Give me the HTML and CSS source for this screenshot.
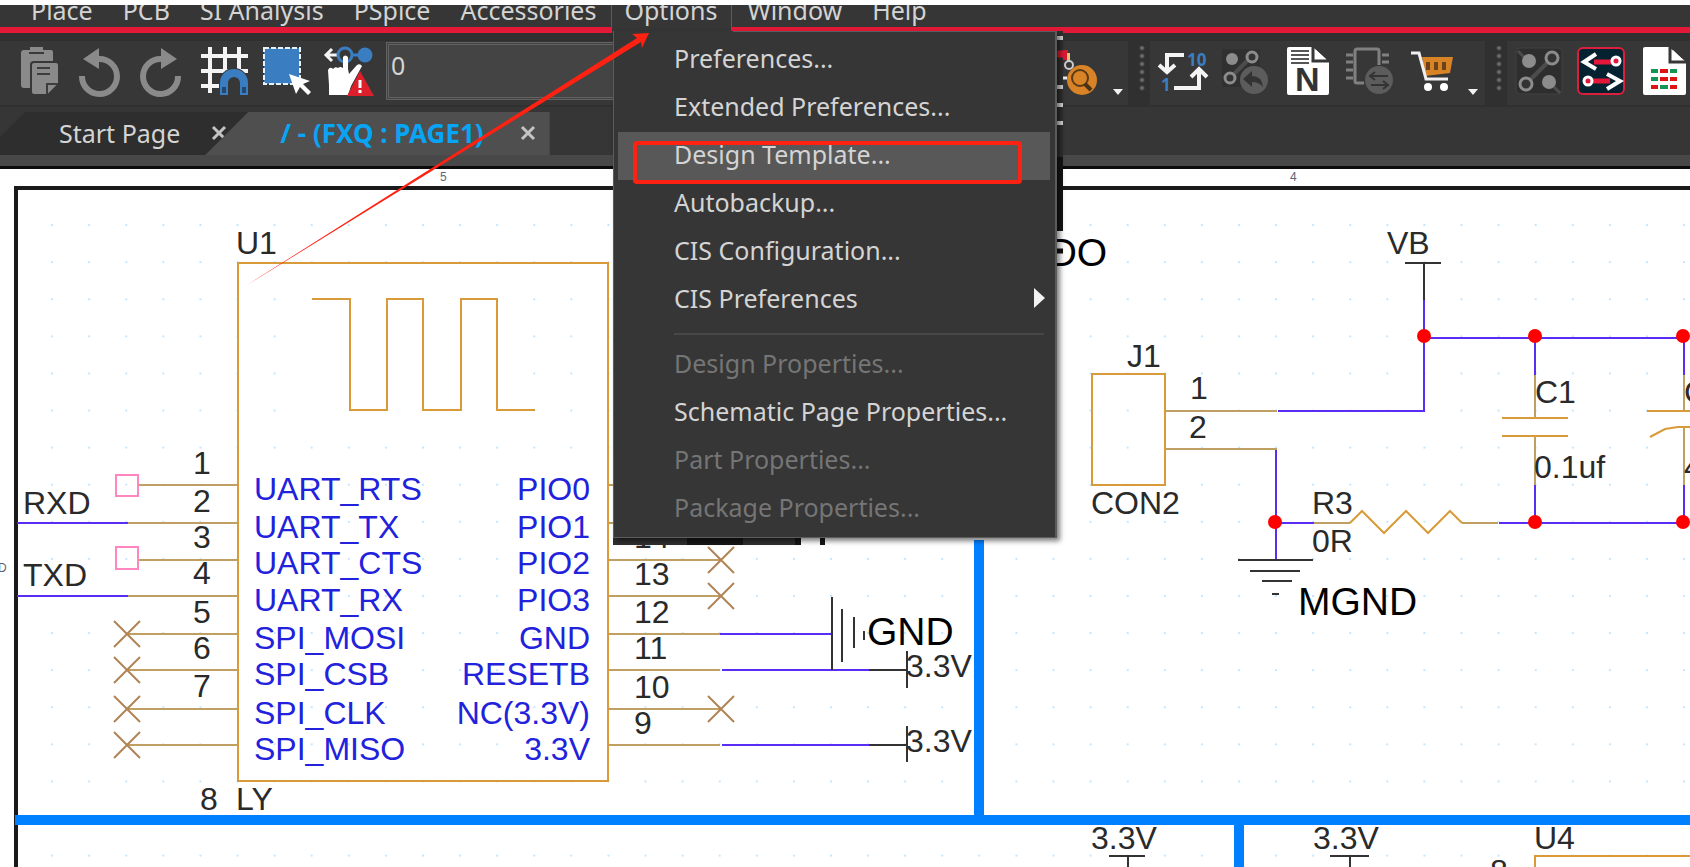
FILE: index.html
```html
<!DOCTYPE html>
<html lang="en">
<head>
<meta charset="utf-8">
<title>Schematic editor</title>
<link rel="stylesheet" href="styles.css">
</head>
<body>
<div class="app">
  <nav class="menubar" aria-label="Main menu">
    <button class="menu-btn">Place</button>
    <button class="menu-btn">PCB</button>
    <button class="menu-btn">SI Analysis</button>
    <button class="menu-btn">PSpice</button>
    <button class="menu-btn">Accessories</button>
    <button class="menu-btn menu-open">Options</button>
    <button class="menu-btn">Window</button>
    <button class="menu-btn">Help</button>
  </nav>

  <div class="toolbar" role="toolbar" aria-label="Tools">
    <div class="group group-first">
      <button class="tool" aria-label="Paste"><svg viewBox="0 0 48 48"><path d="M10 3h6V0h13v3h8q2 0 2 2v36H10q-3 0-3-3V6q0-3 3-3z" fill="#8a8a8a"/><path d="M15 6h15" stroke="#3a3a3a" stroke-width="2"/><path d="M20 15h22q3 0 3 3v19L34 48H20q-3 0-3-3V18q0-3 3-3z" fill="#8a8a8a" stroke="#373737" stroke-width="2"/><path d="M23 21h13M23 27h13M33 47V37h11" stroke="#3d3d3d" stroke-width="2" fill="none"/></svg></button>
      <button class="tool" aria-label="Undo"><svg viewBox="0 0 48 48"><path d="M6 29A17.500 17.500 0 1 0 23 12" fill="none" stroke="#8a8a8a" stroke-width="6"/><path d="M7 12L23 1v21z" fill="#8a8a8a"/></svg></button>
      <button class="tool" aria-label="Redo"><svg viewBox="0 0 48 48"><path d="M40 29A17.500 17.500 0 1 1 23 12" fill="none" stroke="#8a8a8a" stroke-width="6"/><path d="M39 12L23 1v21z" fill="#8a8a8a"/></svg></button>
      <button class="tool" aria-label="Snap to grid"><svg viewBox="0 0 48 48"><path d="M10 0v46M25 0v24M39 0v24M1 9h47M1 24h47M1 39h19" stroke="#f4f4f4" stroke-width="4"/><path d="M19 48V36a15 15 0 0 1 30 0v12z" fill="#373737"/><path d="M24 48V36a10 10 0 0 1 20 0v12" fill="none" stroke="#3a7dc1" stroke-width="8"/><path d="M22 40h4v6h-4zM42 40h4v6h-4z" fill="#24486e"/></svg></button>
      <button class="tool" aria-label="Select area"><svg viewBox="0 0 48 48"><path d="M2 1h36v36H2z" fill="#3a7dc1" stroke="#e8f0f8" stroke-width="2" stroke-dasharray="5 2"/><path d="M27 27l21 7-7 3 8 8-3 3-8-8-4 7z" fill="#fff"/></svg></button>
      <button class="tool" aria-label="Drag connected"><svg viewBox="0 0 48 48"><path d="M2 8h12M8 2L2 8l6 6" fill="none" stroke="#f4f4f4" stroke-width="3"/><circle cx="21" cy="8" r="7" fill="none" stroke="#3a7dc1" stroke-width="3"/><path d="M28 8h6" stroke="#3a7dc1" stroke-width="3"/><circle cx="41" cy="8" r="7.500" fill="#3a7dc1"/><path d="M19 10q2-3 5 0v12l1 5 8-9q3-2 5 1L27 39l-3 9H5V38L4 23q2-4 5-1 2-3 5-1 2-2 5 0z" fill="#fff"/><path d="M36 24l14 25H23z" fill="#dc1f2b"/><path d="M36 33v8M36 43v3" stroke="#fff" stroke-width="3"/></svg></button>
      <input class="find" type="text" value="0" aria-label="Search">
      <button class="tool" aria-label="Find part"><svg viewBox="0 0 48 48"><path d="M12 3h5v10h-5z" fill="#dc1733"/><path d="M16 6h3v8h-3z" fill="#e8c37a"/><circle cx="18" cy="18" r="4" fill="none" stroke="#ccc" stroke-width="2"/><path d="M10 31h6" stroke="#eee" stroke-width="3"/><circle cx="31" cy="33" r="15" fill="#d98327"/><circle cx="29" cy="31" r="8" fill="none" stroke="#5a3a17" stroke-width="2"/><path d="M34 37l6 6" stroke="#4a3218" stroke-width="4"/></svg></button>
      <button class="drop" aria-label="More search options"></button>
    </div>
    <div class="handle"></div>
    <div class="group">
      <button class="tool" aria-label="Renumber"><svg viewBox="0 0 48 48"><path d="M26 8H9v16M1 18l8 7 8-7M16 41h25V24M33 30l8-8 8 8" fill="none" stroke="#f4f4f4" stroke-width="4"/><text class="icon-num" x="29" y="19">10</text><text class="icon-num" x="3" y="44">1</text></svg></button>
      <button class="tool" aria-label="Undo net"><svg viewBox="0 0 48 48"><path d="M2 2h38v38H2z" fill="#303030"/><path d="M12 29L29 12" stroke="#4c4c4c" stroke-width="4"/><circle cx="12" cy="12" r="6" fill="#8c8c8c"/><circle cx="32" cy="10" r="5" fill="#333" stroke="#8c8c8c" stroke-width="3"/><circle cx="10" cy="31" r="5" fill="#333" stroke="#8c8c8c" stroke-width="3"/><circle cx="34" cy="33" r="14" fill="#5c5c5c"/><path d="M23 32l9-8v5q10 0 11 11-4-5-11-5v5z" fill="#333"/></svg></button>
      <button class="tool" aria-label="Netlist"><svg viewBox="0 0 48 48"><path d="M7 0h24l16 15v31q0 2-2 2H7q-2 0-2-2V2q0-2 2-2z" fill="#fff"/><path d="M32 0h15v14z" fill="#373737"/><path d="M31 0v14h16" fill="none" stroke="#373737" stroke-width="3"/><path d="M34 3l10 9H34z" fill="#fff"/><path d="M9 4h18M9 8h18M9 12h18M9 16h18" stroke="#555" stroke-width="2"/><text class="icon-n" x="13" y="44">N</text></svg></button>
      <button class="tool" aria-label="Swap part"><svg viewBox="0 0 48 48"><path d="M20 36H13q-2 0-2-2V4q0-2 2-2h20q2 0 2 2v14" fill="none" stroke="#808080" stroke-width="3"/><path d="M2 8h7M2 15h7M2 23h7M2 31h7M38 8h7M38 15h7" stroke="#808080" stroke-width="3"/><circle cx="35" cy="33" r="14" fill="#5c5c5c"/><path d="M44 29H27M31 25l-5 4 5 4M27 38h17M39 34l5 4-5 4" fill="none" stroke="#333" stroke-width="2"/></svg></button>
      <button class="tool" aria-label="Parts cart"><svg viewBox="0 0 48 48"><path d="M16 10h31l-3 16-25 3z" fill="#d98327"/><path d="M22 15v8M30 15v8M38 15v8" stroke="#6b431b" stroke-width="4"/><path d="M5 6h8l7 26h22" fill="none" stroke="#f0f0f0" stroke-width="3"/><circle cx="22" cy="40" r="4" fill="#fff"/><circle cx="38" cy="40" r="4" fill="#fff"/></svg></button>
      <button class="drop" aria-label="More cart options"></button>
    </div>
    <div class="handle"></div>
    <div class="group group-last">
      <button class="tool" aria-label="Net groups"><svg viewBox="0 0 48 48"><rect x="1" y="1" width="46" height="46" rx="4" fill="#2e2e2e" stroke="#414141"/><path d="M3 4l6 6M39 40l6 6" stroke="#4c4c4c" stroke-width="3"/><path d="M15 33L33 15" stroke="#4c4c4c" stroke-width="4"/><circle cx="14" cy="14" r="7" fill="#8c8c8c"/><circle cx="34" cy="35" r="7" fill="#8c8c8c"/><circle cx="37" cy="11" r="6" fill="#333" stroke="#8c8c8c" stroke-width="3"/><circle cx="11" cy="37" r="6" fill="#333" stroke="#8c8c8c" stroke-width="3"/></svg></button>
      <button class="tool" aria-label="Off-page ports"><svg viewBox="0 0 48 48"><rect x="1" y="1" width="46" height="46" rx="5" fill="#04222f" stroke="#dc1f3c" stroke-width="2"/><path d="M17 15h18M15 34h18" stroke="#e3173a" stroke-width="5"/><path d="M19 7L7 15l12 7M30 27l13 7-13 8" fill="none" stroke="#fff" stroke-width="4"/><circle cx="39" cy="14" r="4" fill="#e3173a" stroke="#fff" stroke-width="3"/><circle cx="11" cy="34" r="4" fill="#e3173a" stroke="#fff" stroke-width="3"/></svg></button>
      <button class="tool" aria-label="Report"><svg viewBox="0 0 48 48"><path d="M6 0h24l17 15v31q0 2-2 2H6q-2 0-2-2V2q0-2 2-2z" fill="#fff"/><path d="M32 0h15v14z" fill="#373737"/><path d="M31 0v15h16" fill="none" stroke="#373737" stroke-width="3"/><path d="M34 3l10 10H34z" fill="#fff"/><path d="M12 24h7M31 24h7M12 32h7M21 40h8" stroke="#149455" stroke-width="4"/><path d="M21 24h8M21 32h8M31 32h7M12 40h7M31 40h7" stroke="#e01313" stroke-width="4"/></svg></button>
    </div>
  </div>

  <div class="tabs">
    <div class="tab"><span>Start Page</span><button class="close" aria-label="Close Start Page"><svg viewBox="0 0 16 16"><path d="M2 2l12 12M14 2L2 14" stroke="#c4c4c4" stroke-width="3"/></svg></button></div>
    <div class="tab tab-active"><span>/ - (FXQ : PAGE1)</span><button class="close" aria-label="Close PAGE1"><svg viewBox="0 0 16 16"><path d="M2 2l12 12M14 2L2 14" stroke="#c4c4c4" stroke-width="3"/></svg></button></div>
  </div>

  <main class="canvas">
    <svg class="sheet" role="img" aria-label="Schematic page">
      <defs>
        <pattern id="grid" x="14" y="187" width="37.090" height="37.090" patternUnits="userSpaceOnUse"><path d="M0 0h2v2H0z" fill="#c4e6ff"/></pattern>
        <g id="nc"><path d="M-13-13L13 13M13-13L-13 13" stroke="#b08455" stroke-width="2"/></g>
      </defs>
      <g transform="translate(0 -169)">
        <rect x="40" y="200" width="3000" height="2000" fill="url(#grid)"/>
        <path d="M290 290h230v130H290z" fill="#fff"/>
        <g class="frame"><path d="M3000 188H16V2000"/></g>
        <text class="ruler" x="440" y="181">5</text>
        <text class="ruler" x="1290" y="181">4</text>
        <text class="ruler" x="-2" y="572">D</text>

        <g class="pin"><path d="M138 485h100M128 523h110M138 560h100M128 596h110M127 634h111M127 670h111M127 709h111M127 745h111M608 485h112M608 523h112M608 560h112M608 596h112M608 634h112M608 670h112M608 709h112M608 745h112"/></g>
        <g class="part"><path d="M238 263H608V781H238zM312 299H350V410H387V299H423V410H461V299H497V410H535"/></g>
        <g class="port"><path d="M116 475h22v21h-22zM116 547h22v22h-22z"/></g>
        <g class="wire"><path d="M17 523H128M17 596H128M720 634H831M722 670H869M722 745H869"/></g>
        <use href="#nc" x="127" y="634"/><use href="#nc" x="127" y="670"/><use href="#nc" x="127" y="709"/><use href="#nc" x="127" y="745"/>
        <use href="#nc" x="721" y="560"/><use href="#nc" x="721" y="596"/><use href="#nc" x="721" y="709"/>
        <g class="power"><path d="M832 597v73M842 609v53M854 617v31M864 631v9M869 670h37M907 651v37M869 745h37M907 726v36"/></g>

        <g class="label">
          <text x="236" y="254">U1</text><text x="200" y="810">8</text><text x="236" y="810">LY</text>
          <text x="23" y="514">RXD</text><text x="23" y="586">TXD</text>
          <text x="193" y="474">1</text><text x="193" y="512">2</text><text x="193" y="548">3</text><text x="193" y="584">4</text><text x="193" y="623">5</text><text x="193" y="659">6</text><text x="193" y="697">7</text>
          <text x="634" y="548">14</text><text x="634" y="585">13</text><text x="634" y="623">12</text><text x="634" y="659">11</text><text x="634" y="698">10</text><text x="634" y="734">9</text>
          <text x="906" y="677">3.3V</text><text x="906" y="752">3.3V</text>
        </g>
        <g class="pin-name">
          <text x="254" y="500">UART_RTS</text><text x="254" y="538">UART_TX</text><text x="254" y="574">UART_CTS</text><text x="254" y="611">UART_RX</text><text x="254" y="649">SPI_MOSI</text><text x="254" y="685">SPI_CSB</text><text x="254" y="724">SPI_CLK</text><text x="254" y="760">SPI_MISO</text>
        </g>
        <g class="pin-name pin-name-end">
          <text x="590" y="500">PIO0</text><text x="590" y="538">PIO1</text><text x="590" y="574">PIO2</text><text x="590" y="611">PIO3</text><text x="590" y="649">GND</text><text x="590" y="685">RESETB</text><text x="590" y="724">NC(3.3V)</text><text x="590" y="760">3.3V</text>
        </g>
        <g class="title"><text x="867" y="645">GND</text><text x="1298" y="615">MGND</text><text x="1027" y="266">LDO</text></g>

        <g class="wire"><path d="M1424 300V411H1278M1424 338H1684M1535 338V375M1684 338V375M1276 449V560M1276 523H1314M1499 523H1684M1535 485V523M1684 485V523"/></g>
        <g class="pin"><path d="M1165 411h112M1165 449h112M1314 523h36M1462 523h36M1535 375v43M1535 437v48M1684 375v36M1684 427v58"/></g>
        <g class="part"><path d="M1092 374H1165V485H1092zM1350 523l12-12 22 22 22-22 22 22 22-22 12 12M1502 418h66M1502 436h66M1647 411h74M1650 437l15-8 13-2h12l13 2 15 8M3000 856H1535V2000"/></g>
        <g class="power"><path d="M1405 263h36M1424 263v37M1238 560h75M1250 571h50M1262 581h30M1272 594h7M1109 856h36M1128 856v37M1330 856h39M1350 856v37"/></g>
        <g fill="#ff0000"><circle cx="1424" cy="336" r="7"/><circle cx="1535" cy="336" r="7"/><circle cx="1683" cy="336" r="7"/><circle cx="1275" cy="522" r="7"/><circle cx="1535" cy="522" r="7"/><circle cx="1683" cy="522" r="7"/></g>
        <g class="label">
          <text x="1387" y="254">VB</text><text x="1127" y="367">J1</text><text x="1190" y="399">1</text><text x="1189" y="438">2</text><text x="1091" y="514">CON2</text>
          <text x="1312" y="514">R3</text><text x="1312" y="552">0R</text><text x="1535" y="403">C1</text><text x="1534" y="478">0.1uf</text><text x="1684" y="403">C2</text><text x="1684" y="478">4.7uf</text>
          <text x="1091" y="849">3.3V</text><text x="1313" y="849">3.3V</text><text x="1534" y="849">U4</text><text x="1490" y="882">8</text>
        </g>
        <g class="divider"><path d="M15 820H3000M979 540V820M1239 820V2000"/></g>
      </g>
    </svg>
  </main>

  <div class="popup-wrap">
    <svg class="ghost" aria-hidden="true">
      <path d="M440 0h10v200h-10zM0 504h187v10H0z" fill="#303030"/>
      <path d="M440 126h10v74h-10zM74 504h56v10H74zM182 504h6v10h-6zM207 504h5v10h-5z" fill="#161616"/>
      <path d="M440 7h10M440 56h10M440 74h10M440 92h10" stroke="#d8d8d8" stroke-width="4"/>
      <path d="M440 220h10" stroke="#111" stroke-width="5"/>
      <path d="M440 23h10" stroke="#dc1733" stroke-width="7"/>
    </svg>
    <div class="popup" role="menu" aria-label="Options">
      <button class="item" role="menuitem">Preferences...</button>
      <button class="item" role="menuitem">Extended Preferences...</button>
      <button class="item item-hover" role="menuitem">Design Template...</button>
      <button class="item" role="menuitem">Autobackup...</button>
      <button class="item" role="menuitem">CIS Configuration...</button>
      <button class="item" role="menuitem">CIS Preferences<svg class="caret" viewBox="0 0 12 20"><path d="M1 0l11 10L1 20z" fill="#f2f2f2"/></svg></button>
      <hr class="rule">
      <button class="item" role="menuitem" disabled>Design Properties...</button>
      <button class="item" role="menuitem">Schematic Page Properties...</button>
      <button class="item" role="menuitem" disabled>Part Properties...</button>
      <button class="item" role="menuitem" disabled>Package Properties...</button>
    </div>
  </div>

  <svg class="marks" aria-hidden="true">
    <path d="M247 285L637 38l-5-4 17-1-7 15-1-6z" fill="#ff2112"/>
    <rect x="635" y="143" width="385" height="39" rx="2" fill="none" stroke="#ff2112" stroke-width="4"/>
  </svg>
</div>
</body>
</html>
```
FILE: styles.css
```css
* { box-sizing: border-box; }

body {
  margin: 0;
  background: #fff;
  font-family: "Noto Sans", "Open Sans", sans-serif;
  font-size: 25px;
  color: #d4d4d4;
}

button {
  margin: 0;
  padding: 0;
  border: 0;
  background: none;
  color: inherit;
  font: inherit;
}

.app {
  position: relative;
  display: flex;
  flex-direction: column;
  height: 100vh;
  padding-top: 5px;
  overflow: hidden;
}

/* Menu bar */
.menubar {
  display: flex;
  flex: none;
  height: 28px;
  padding-left: 16px;
  overflow: hidden;
  background: linear-gradient(#363636 22px, #e31937 22px);
}

.menu-btn {
  flex: none;
  padding: 0 15px 18px;
  line-height: 10px;
  white-space: nowrap;
}

.menu-open {
  padding: 0 14px 18px 12px;
  border: solid #5c5c5c;
  border-width: 0 1px;
  background: #363636;
}

/* Toolbar */
.toolbar {
  display: flex;
  flex: none;
  height: 74px;
  padding: 8px 0 2px;
  overflow: hidden;
  background: #303030;
}

.group {
  display: flex;
  flex: none;
  align-items: center;
  gap: 14px;
  padding: 0 7px 4px 8px;
  background: #373737;
}

.group-first { padding: 0 5px 4px 14px; }
.group-last { flex: 1 0 auto; }

.tool, .tool svg {
  display: block;
  flex: none;
  width: 48px;
  height: 48px;
}

.tool svg { overflow: visible; }

.icon-num { font: bold 17px "Open Sans", sans-serif; fill: #3a7dc1; }
.icon-n { font: bold 34px "Liberation Sans", sans-serif; fill: #333; }

.find {
  flex: none;
  width: 651px;
  height: 58px;
  padding: 0 2px 12px;
  border: 3px double #626262;
  background: #444;
  color: #d4d4d4;
  font: inherit;
}

.drop {
  flex: none;
  align-self: flex-end;
  width: 10px;
  height: 6px;
  margin-bottom: 6px;
  background: #f2f2f2;
  clip-path: polygon(0 0, 100% 0, 50% 100%);
}

.handle {
  flex: none;
  width: 22px;
  margin: 5px 0 13px;
  background: radial-gradient(circle at 14px 4px, #6c6c6c 1px, transparent 3px) 0 -2px / 22px 8px repeat-y;
}

/* Document tabs */
.tabs {
  display: flex;
  flex: none;
  height: 62px;
  padding-top: 5px;
  border-bottom: 3px solid #0c0c0c;
  background: linear-gradient(#363636 48px, #484848 48px);
}

.tab {
  display: flex;
  flex: none;
  align-items: center;
  height: 43px;
  gap: 31px;
  margin-left: -18px;
  padding: 0 24px 2px 77px;
  background: #2e2e2e;
  clip-path: polygon(43px 0, 100% 0, 100% 100%, 0 100%);
}

.tab-active {
  gap: 36px;
  margin-left: -46px;
  padding: 0 14px 2px 75px;
  background: #4f4f4f;
  color: #08a4f5;
  font-size: 26px;
  font-weight: bold;
}

.close, .close svg {
  display: block;
  width: 16px;
  height: 16px;
}

/* Schematic */
.canvas {
  flex: 1;
  min-height: 0;
  background: #fff;
}

.sheet {
  display: block;
  width: 100%;
  height: 100%;
  font-family: "Liberation Sans", Arial, sans-serif;
}

.frame { fill: none; stroke: #1a1a1a; stroke-width: 4; }
.part { fill: none; stroke: #d99b3a; stroke-width: 2; }
.pin { fill: none; stroke: #bfa062; stroke-width: 2; }
.port { fill: none; stroke: #ff86c0; stroke-width: 2; }
.wire { fill: none; stroke: #5a2df5; stroke-width: 2; }
.power { fill: none; stroke: #333; stroke-width: 2; }
.divider { fill: none; stroke: #0080ff; stroke-width: 10; }
.label { font-size: 32px; fill: #2a2a2a; }
.title { font-size: 39px; fill: #000; }
.pin-name { font-size: 32px; fill: #2222dd; }
.pin-name-end { text-anchor: end; }
.ruler { font-size: 12px; fill: #5a6472; }

/* Options menu */
.popup-wrap {
  position: absolute;
  top: 31px;
  left: 613px;
}

.ghost {
  position: absolute;
  top: 0;
  left: 0;
  width: 450px;
  height: 514px;
}

.popup {
  position: relative;
  width: 444px;
  padding: 4px 5px 4px 4px;
  border: solid #5c5c5c;
  border-width: 1px 2px 1px 1px;
  background: #363636;
  box-shadow: 3px 3px 5px rgba(0, 0, 0, .5);
}

.popup::before {
  content: "";
  position: absolute;
  top: -1px;
  left: 0;
  width: 119px;
  height: 3px;
  background: #363636;
}

.item {
  display: flex;
  align-items: center;
  justify-content: space-between;
  width: 100%;
  height: 48px;
  padding: 0 5px 4px 56px;
  white-space: nowrap;
  text-align: left;
}

.item-hover { background: #585858; }
.item:disabled { color: #757575; }

.caret { width: 12px; height: 20px; }

.rule {
  height: 2px;
  margin: 9px 6px 6px 56px;
  border: 0;
  background: #474747;
}

/* Annotation overlay */
.marks {
  position: absolute;
  top: 0;
  left: 0;
  width: 100%;
  height: 100%;
  pointer-events: none;
}
```
